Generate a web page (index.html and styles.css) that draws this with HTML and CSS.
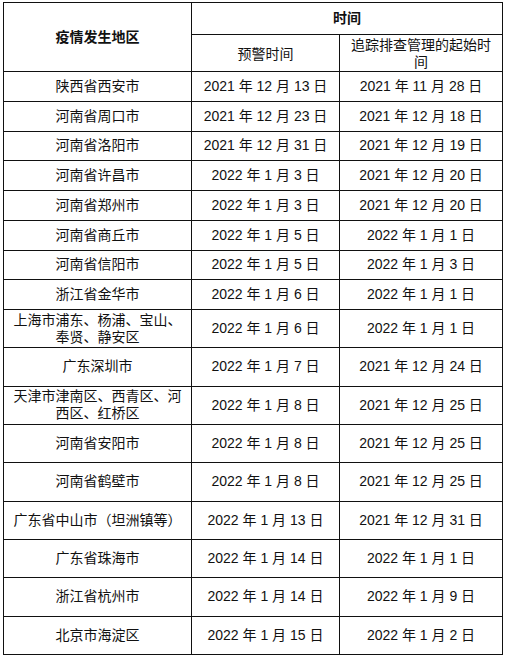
FILE: index.html
```html
<!DOCTYPE html>
<html lang="zh-CN">
<head>
<meta charset="utf-8">
<title>疫情发生地区时间表</title>
<link rel="stylesheet" href="styles.css">
</head>
<body>
<table class="tbl">
  <colgroup>
    <col class="c1">
    <col class="c2">
    <col class="c3">
  </colgroup>
  <thead>
    <tr class="h1">
      <th rowspan="2" class="area-h">疫情发生地区</th>
      <th colspan="2" class="time-h">时间</th>
    </tr>
    <tr class="h2">
      <td>预警时间</td>
      <td class="two">追踪排查管理的起始时<br>间</td>
    </tr>
  </thead>
  <tbody>
    <tr class="s"><td>陕西省西安市</td><td>2021 年 12 月 13 日</td><td>2021 年 11 月 28 日</td></tr>
    <tr class="s"><td>河南省周口市</td><td>2021 年 12 月 23 日</td><td>2021 年 12 月 18 日</td></tr>
    <tr class="s"><td>河南省洛阳市</td><td>2021 年 12 月 31 日</td><td>2021 年 12 月 19 日</td></tr>
    <tr class="s"><td>河南省许昌市</td><td>2022 年 1 月 3 日</td><td>2021 年 12 月 20 日</td></tr>
    <tr class="s"><td>河南省郑州市</td><td>2022 年 1 月 3 日</td><td>2021 年 12 月 20 日</td></tr>
    <tr class="s"><td>河南省商丘市</td><td>2022 年 1 月 5 日</td><td>2022 年 1 月 1 日</td></tr>
    <tr class="s"><td>河南省信阳市</td><td>2022 年 1 月 5 日</td><td>2022 年 1 月 3 日</td></tr>
    <tr class="s"><td>浙江省金华市</td><td>2022 年 1 月 6 日</td><td>2022 年 1 月 1 日</td></tr>
    <tr class="t"><td class="two">上海市浦东、杨浦、宝山、<br>奉贤、静安区</td><td>2022 年 1 月 6 日</td><td>2022 年 1 月 1 日</td></tr>
    <tr class="t"><td>广东深圳市</td><td>2022 年 1 月 7 日</td><td>2021 年 12 月 24 日</td></tr>
    <tr class="t"><td class="two">天津市津南区、西青区、河<br>西区、红桥区</td><td>2022 年 1 月 8 日</td><td>2021 年 12 月 25 日</td></tr>
    <tr class="t"><td>河南省安阳市</td><td>2022 年 1 月 8 日</td><td>2021 年 12 月 25 日</td></tr>
    <tr class="t"><td>河南省鹤壁市</td><td>2022 年 1 月 8 日</td><td>2021 年 12 月 25 日</td></tr>
    <tr class="t"><td>广东省中山市（坦洲镇等）</td><td>2022 年 1 月 13 日</td><td>2021 年 12 月 31 日</td></tr>
    <tr class="t"><td>广东省珠海市</td><td>2022 年 1 月 14 日</td><td>2022 年 1 月 1 日</td></tr>
    <tr class="t"><td>浙江省杭州市</td><td>2022 年 1 月 14 日</td><td>2022 年 1 月 9 日</td></tr>
    <tr class="t"><td>北京市海淀区</td><td>2022 年 1 月 15 日</td><td>2022 年 1 月 2 日</td></tr>
  </tbody>
</table>
</body>
</html>
```
FILE: styles.css
```css
html, body {
  margin: 0;
  padding: 0;
  background: #ffffff;
}

body {
  padding: 2px 0 0 3px;
  font-family: "Liberation Sans", "Noto Sans CJK SC", sans-serif;
  font-size: 14px;
  color: #111111;
}

.tbl {
  border-collapse: collapse;
  table-layout: fixed;
  width: 499px;
}

.c1 { width: 188px; }
.c2 { width: 148px; }
.c3 { width: 163px; }

.tbl th,
.tbl td {
  border: 1px solid #111111;
  padding: 0;
  text-align: center;
  vertical-align: middle;
  line-height: 17px;
  white-space: nowrap;
}

.tbl th {
  font-weight: bold;
}

.area-h {
  padding-top: 6px;
}

.h1 { height: 32px; }
.h2 { height: 34px; }
.h2 td { padding-top: 2px; }

.s { height: 29.75px; }
.t { height: 38.33px; }

.two {
  line-height: 16.5px;
}
```
